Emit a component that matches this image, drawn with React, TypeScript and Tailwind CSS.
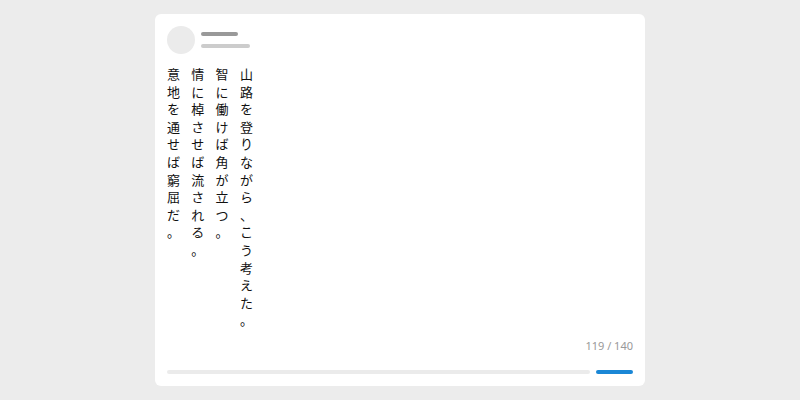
const lines = [
  "山路を登りながら、こう考えた。",
  "智に働けば角が立つ。",
  "情に棹させば流される。",
  "意地を通せば窮屈だ。",
];

export default function App() {
  return (
    <div className="w-[800px] h-[400px] bg-[#ececec] flex items-center justify-center font-['Noto_Sans_CJK_JP',sans-serif]">
      <div className="w-[490px] h-[372px] bg-white rounded-md p-3 flex flex-col">
        <div className="flex items-center gap-1.5">
          <div className="w-7 h-7 rounded-full bg-[#ebebeb]" />
          <div className="flex flex-col gap-2">
            <div className="w-[37px] h-1 rounded-full bg-[#999]" />
            <div className="w-[49px] h-1 rounded-full bg-[#ccc]" />
          </div>
        </div>
        {/* vertical text, columns right to left */}
        <div className="flex-1 min-h-0 mt-[11px]">
          <div className="flex flex-row-reverse w-fit gap-[11.3px] text-[13px] leading-[17.6px] text-[#111]">
            {lines.map((l) => (
              <div key={l} className="flex flex-col w-[13px]">
                {Array.from(l).map((c, i) => (
                  <span key={i}>{c}</span>
                ))}
              </div>
            ))}
          </div>
        </div>
        <div className="text-right text-[11px] leading-4 text-[#999] font-['Noto_Sans',sans-serif]">119 / 140</div>
        <div className="flex items-center gap-1.5 mt-[16px]">
          <div className="flex-1 h-1 rounded-full bg-[#ebebeb]" />
          <div className="w-[37px] h-1 rounded-full bg-[#1a87d6]" />
        </div>
      </div>
    </div>
  );
}
